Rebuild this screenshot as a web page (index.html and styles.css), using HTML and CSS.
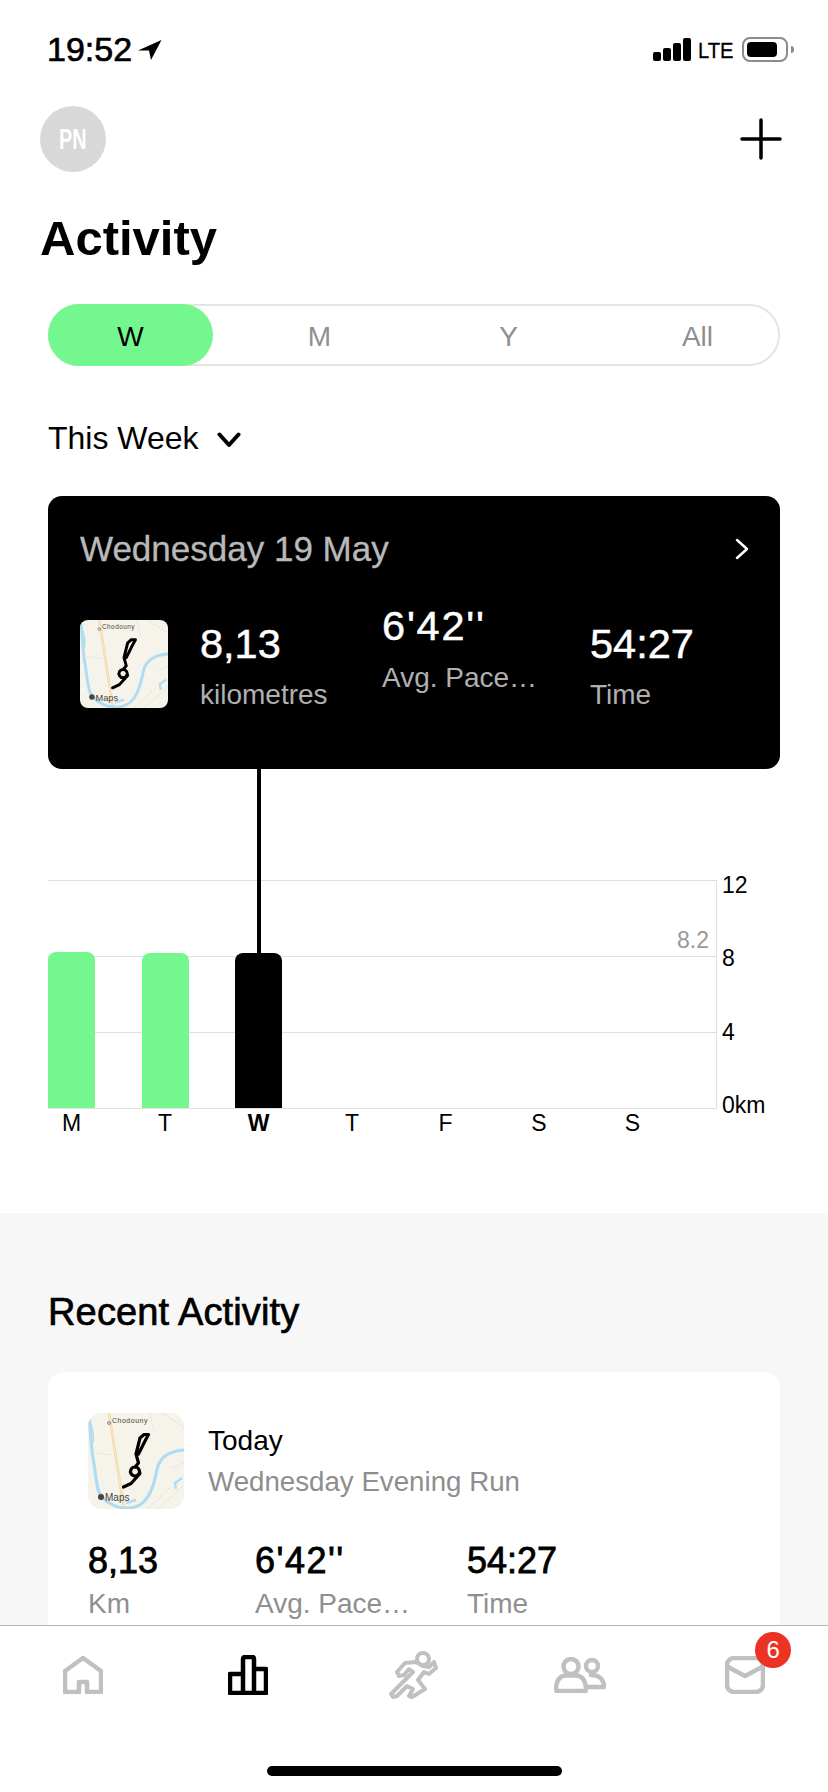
FILE: index.html
```html
<!DOCTYPE html>
<html lang="en">
<head>
<meta charset="utf-8">
<title>Activity</title>
<link rel="stylesheet" href="styles.css">
</head>
<body>
<svg class="defs" width="0" height="0" aria-hidden="true">
  <symbol id="map" viewBox="0 0 96 96">
    <rect width="96" height="96" fill="#f6f3ea"/>
    <path d="M62 0 66 18 M74 0 96 14 M70 96 96 72 M60 96 82 74 M8 40 24 42 M32 70 44 78 M84 55 96 50" fill="none" stroke="#dfddd3" stroke-width="1" stroke-dasharray="2 1.5"/>
    <path d="M21 0 36 96" fill="none" stroke="#f2d6a2" stroke-width="2.6"/>
    <path d="M21 0 36 96" fill="none" stroke="#fbf3dd" stroke-width=".7"/>
    <path d="M1 3C3 20 3 35 5 45S8 72 11 79 24 94 36 95 56 92 62 80 67 62 70 53 82 38 96 37" fill="none" stroke="#aedcf2" stroke-width="3.2"/>
    <path d="M1 8C5 15 6 22 5 30" fill="none" stroke="#aedcf2" stroke-width="1.6"/>
    <path d="M88 76 87 70 94 65M38 90 48 87" fill="none" stroke="#aedcf2" stroke-width="2.4"/>
    <circle cx="21" cy="10" r="1.4" fill="#fff" stroke="#444" stroke-width=".7"/>
    <circle cx="13" cy="84" r="3" fill="#444"/>
    <path d="M35.500 74 43 70.500 52 60.500M47 54a4.500 4.500 0 1 0 .01 0M47 54 50.500 50 48 41 52 25 56 21.500H60.500L57 28 50.500 41" fill="none" stroke="#000" stroke-width="3.200" stroke-linecap="round" stroke-linejoin="round"/>
  </symbol>
</svg>

<div class="screen">
  <div class="main">
    <div class="status">
      <div class="clock">
        <span class="time">19:52</span>
        <svg class="loc" viewBox="0 0 24 20"><path d="M23.500 0 0 10.500H11L13 20Z"/></svg>
      </div>
      <div class="status-right">
        <svg class="signal" viewBox="0 0 38 24">
          <rect x="0" y="14" width="8" height="9" rx="2"/>
          <rect x="10" y="10" width="8" height="13" rx="2"/>
          <rect x="20" y="5" width="8" height="18" rx="2"/>
          <rect x="30" y="0" width="8" height="23" rx="2"/>
        </svg>
        <span class="lte">LTE</span>
        <div class="battery"><div class="battery-fill"></div></div>
        <div class="battery-nub"></div>
      </div>
    </div>

    <div class="top">
      <div class="avatar"><span>PN</span></div>
      <svg class="plus" viewBox="0 0 42 42"><path d="M21 2V40M2 21H40"/></svg>
    </div>

    <h1 class="title">Activity</h1>

    <div class="segments">
      <div class="segment active">W</div>
      <div class="segment">M</div>
      <div class="segment">Y</div>
      <div class="segment">All</div>
    </div>

    <div class="range">
      <span>This Week</span>
      <svg class="chev-down" viewBox="0 0 24 16"><path d="M2.500 2.500 12 13 21.500 2.500"/></svg>
    </div>

    <div class="day-card">
      <div class="day-head">
        <span class="day-date">Wednesday 19 May</span>
        <svg class="chev-right" viewBox="0 0 14 22"><path d="M2 2 12 11 2 20"/></svg>
      </div>
      <div class="day-stats">
        <svg class="thumb-sm" viewBox="0 0 96 96">
          <use href="#map" width="96" height="96"/>
          <text x="24" y="10" class="map-town">Chodouny</text>
          <text x="17" y="88" class="map-brand">Maps</text>
        </svg>
        <div class="stat">
          <div class="stat-value">8,13</div>
          <div class="stat-label">kilometres</div>
        </div>
        <div class="stat stat-raised">
          <div class="stat-value pace">6'42''</div>
          <div class="stat-label">Avg. Pace…</div>
        </div>
        <div class="stat">
          <div class="stat-value">54:27</div>
          <div class="stat-label">Time</div>
        </div>
      </div>
    </div>

    <div class="chart">
      <div class="plot">
        <div class="grid-lines">
          <div class="grid-line"></div>
          <div class="grid-line"></div>
          <div class="grid-line"></div>
        </div>
        <span class="avg">8.2</span>
        <div class="bars">
          <div class="bar" style="height:156px"></div>
          <div class="bar" style="height:155px"></div>
          <div class="bar bar-selected" style="height:155px"></div>
        </div>
      </div>
      <div class="y-axis">
        <span>12</span><span>8</span><span>4</span><span>0km</span>
      </div>
    </div>
    <div class="days">
      <span>M</span><span>T</span><span class="day-on">W</span><span>T</span><span>F</span><span>S</span><span>S</span>
    </div>

    <section class="recent">
      <h2 class="recent-title">Recent Activity</h2>
      <div class="recent-card">
        <div class="recent-head">
          <svg class="thumb-lg" viewBox="0 0 96 96">
            <use href="#map" width="96" height="96"/>
            <text x="24" y="10" class="map-town">Chodouny</text>
            <text x="17" y="88" class="map-brand">Maps</text>
          </svg>
          <div class="recent-text">
            <div class="recent-when">Today</div>
            <div class="recent-name">Wednesday Evening Run</div>
          </div>
        </div>
        <div class="recent-stats">
          <div>
            <div class="recent-value">8,13</div>
            <div class="recent-label">Km</div>
          </div>
          <div>
            <div class="recent-value recent-pace">6'42''</div>
            <div class="recent-label">Avg. Pace…</div>
          </div>
          <div>
            <div class="recent-value">54:27</div>
            <div class="recent-label">Time</div>
          </div>
        </div>
      </div>
    </section>
  </div>

  <nav class="tabbar">
    <div class="tabs">
      <div class="tab">
        <svg class="ico ico-home" viewBox="0 0 40 38"><path d="M2 36V15L20 2 38 15V36H24V26H16V36Z"/></svg>
      </div>
      <div class="tab">
        <svg class="ico ico-stats" viewBox="0 0 40 40"><path d="M2 38V19H15V4Q15 2 17 2H24Q26 2 26 4V14H38V38ZM15 19V38M26 14V38"/></svg>
      </div>
      <div class="tab">
        <svg class="ico ico-run" viewBox="0 0 49 48">
          <circle cx="34" cy="8" r="6"/>
          <path d="M27 11 16 12 8 21 10 25 15 24 20 18 24 21 15 30 2 43 4 46 8 45 18 35 24 38 20 45 23 46 36 38 29 29 35 21 40 23 47 17 45 11 40 16 34 15Z"/>
        </svg>
      </div>
      <div class="tab">
        <svg class="ico ico-people" viewBox="0 0 52 36">
          <circle cx="17" cy="9.500" r="7.500"/>
          <circle cx="38" cy="9" r="6"/>
          <path d="M2.500 34C1 26 5 18.500 12 18.500H22C29 18.500 33 26 31.500 34Z"/>
          <path d="M37 18C46 18 50 23 50 30H34"/>
        </svg>
      </div>
      <div class="tab">
        <div class="mail">
          <svg class="ico ico-mail" viewBox="0 0 40 38">
            <rect x="2" y="2" width="36" height="34" rx="7"/>
            <path d="M3 11 20 20 37 11"/>
          </svg>
          <span class="badge">6</span>
        </div>
      </div>
    </div>
    <div class="home-indicator"></div>
  </nav>
</div>
</body>
</html>
```
FILE: styles.css
```css
* { box-sizing: border-box; }
html, body { margin: 0; padding: 0; background: #fff; }
body { font-family: "Liberation Sans", Arial, sans-serif; color: #000; }
.defs { position: absolute; }
.map-town { font: 7px "Liberation Sans", sans-serif; fill: #444; letter-spacing: .5px; }
.map-brand { font: 10px "Liberation Sans", sans-serif; fill: #444; }

.screen { width: 828px; height: 1792px; display: flex; flex-direction: column; overflow: hidden; }
.main { flex: 1; min-height: 0; overflow: hidden; display: flex; flex-direction: column; }

/* status bar */
.status { height: 106px; flex: none; padding: 32px 34px 0 47px; display: flex; justify-content: space-between; align-items: flex-start; }
.clock { display: flex; align-items: flex-start; gap: 6px; }
.time { font-size: 34px; line-height: 34px; -webkit-text-stroke: .7px #000; }
.loc { width: 24px; height: 20px; margin-top: 8px; fill: #000; }
.status-right { display: flex; align-items: flex-start; margin-top: 5px; }
.signal { width: 38px; height: 24px; margin-top: 1px; fill: #000; }
.lte { font-size: 22px; line-height: 24px; margin: 2px 0 0 7px; width: 36px; transform: scaleX(.92); transform-origin: left center; white-space: nowrap; -webkit-text-stroke: .3px #000; }
.battery { width: 46px; height: 25px; border: 2px solid #8c8c8c; border-radius: 8px; padding: 3px; margin-left: 8px; }
.battery-fill { width: 30px; height: 15px; background: #000; border-radius: 4px; }
.battery-nub { width: 3px; height: 7px; background: #8c8c8c; border-radius: 0 3px 3px 0; margin: 9px 0 0 3px; }

/* header */
.top { flex: none; display: flex; justify-content: space-between; align-items: center; padding: 0 46px 0 40px; height: 66px; }
.avatar { width: 66px; height: 66px; border-radius: 50%; background: #d8d8d8; display: flex; align-items: center; justify-content: center; }
.avatar span { color: #fff; font-size: 30px; font-weight: 700; transform: scaleX(.66); }
.plus { width: 42px; height: 42px; fill: none; stroke: #000; stroke-width: 3.500; stroke-linecap: round; }
.title { margin: 38px 0 0 40px; font-size: 49px; line-height: 56px; font-weight: 700; flex: none; }

/* segmented */
.segments { flex: none; margin: 38px 48px 0; height: 62px; border: 2px solid #e4e4e4; border-radius: 31px; display: grid; grid-template-columns: repeat(4, 165px); column-gap: 24px; }
.segment { margin: -2px 0; margin-left: -2px; width: 165px; padding-top: 4px; display: flex; align-items: center; justify-content: center; font-size: 28px; color: #8f8f8f; border-radius: 31px; }
.segment.active { background: #75f78f; color: #000; }

/* range */
.range { flex: none; margin: 52px 48px 0; display: flex; align-items: center; gap: 18px; font-size: 32px; line-height: 40px; }
.chev-down { width: 24px; height: 16px; margin-top: 4px; fill: none; stroke: #000; stroke-width: 4; stroke-linecap: round; stroke-linejoin: round; }

/* black card */
.day-card { flex: none; margin: 38px 48px 0; height: 273px; background: #000; border-radius: 14px; padding: 33px 32px 0; color: #fff; }
.day-head { display: flex; justify-content: space-between; align-items: center; height: 40px; margin-bottom: 1px; }
.day-date { font-size: 35px; line-height: 40px; color: #b9b9b9; -webkit-text-stroke: .3px #b9b9b9; }
.chev-right { width: 14px; height: 22px; margin-right: -1px; fill: none; stroke: #fff; stroke-width: 2.500; stroke-linecap: round; stroke-linejoin: round; }
.day-stats { margin-top: 51px; display: grid; grid-template-columns: 88px 150px 176px auto; column-gap: 32px; align-items: start; }
.thumb-sm { width: 88px; height: 88px; border-radius: 8px; display: block; }
.stat { white-space: nowrap; }
.stat-raised { margin-top: -18px; }
.stat-value { font-size: 41.500px; line-height: 48px; -webkit-text-stroke: .5px #fff; }
.stat-label { margin-top: 10px; font-size: 28px; line-height: 34px; color: #b0b0b0; }
.stat-raised .stat-label { margin-top: 11px; }
.pace { letter-spacing: 1.800px; }

/* chart */
.chart { flex: none; margin: 111px 0 0 48px; display: flex; align-items: flex-start; }
.plot { position: relative; width: 669px; height: 229px; border-right: 1px solid #e0e0e0; border-bottom: 1px solid #e0e0e0; }
.grid-lines { height: 100%; display: flex; flex-direction: column; }
.grid-line { flex: 1; border-top: 1px solid #e0e0e0; }
.avg { position: absolute; right: 7px; top: 47px; font-size: 23px; line-height: 26px; color: #999; }
.bars { position: absolute; left: 0; bottom: 0; display: grid; grid-template-columns: repeat(7, 47px); column-gap: 46.500px; align-items: end; }
.bar { position: relative; background: #75f78f; border-radius: 8px 8px 0 0; }
.bar-selected { background: #000; }
.bar-selected::before { content: ""; position: absolute; left: 22px; bottom: 100%; width: 4px; height: 184px; background: #000; }
.y-axis { margin: -8px 0 0 5px; height: 246px; display: flex; flex-direction: column; justify-content: space-between; font-size: 23px; line-height: 26px; }
.days { flex: none; height: 28px; margin: -8px 0 0 48px; display: grid; grid-template-columns: repeat(7, 47px); column-gap: 46.500px; font-size: 23px; line-height: 26px; text-align: center; }
.day-on { font-weight: 700; }

/* recent */
.recent { flex: 1; margin-top: 75px; background: #f7f7f7; padding: 78px 48px 0; }
.recent-title { margin: 0; font-size: 38px; line-height: 42px; font-weight: 400; letter-spacing: .15px; -webkit-text-stroke: .7px #000; }
.recent-card { margin-top: 39px; background: #fff; border-radius: 16px; padding: 41px 40px 60px; }
.recent-head { display: flex; gap: 24px; align-items: flex-start; }
.thumb-lg { width: 96px; height: 96px; border-radius: 14px; display: block; flex: none; }
.recent-text { margin-top: 11px; }
.recent-when { font-size: 28px; line-height: 34px; }
.recent-name { margin-top: 7px; font-size: 27.700px; line-height: 34px; color: #8e8e8e; }
.recent-stats { margin-top: 31px; display: grid; grid-template-columns: 167px 212px auto; white-space: nowrap; }
.recent-value { font-size: 36px; line-height: 42px; -webkit-text-stroke: .8px #000; }
.recent-pace { letter-spacing: 1.500px; }
.recent-label { margin-top: 5px; font-size: 28px; line-height: 34px; color: #8f8f8f; }

/* tab bar */
.tabbar { flex: none; height: 167px; background: #fff; border-top: 1px solid #b5b5b5; display: flex; flex-direction: column; }
.tabs { display: flex; height: 48px; margin-top: 25px; }
.tab { flex: 1; display: flex; align-items: center; justify-content: center; }
.ico { display: block; fill: none; stroke: #c0c0c0; stroke-width: 4.500; stroke-linecap: round; stroke-linejoin: round; }
.ico-home { width: 40px; height: 38px; }
.ico-stats { width: 40px; height: 40px; stroke: #000; }
.ico-run { width: 49px; height: 48px; stroke-width: 4; }
.ico-people { width: 52px; height: 36px; }
.ico-mail { width: 40px; height: 38px; }
.mail { position: relative; }
.badge { position: absolute; left: 30px; top: -24px; width: 36px; height: 36px; border-radius: 50%; background: #ec3323; color: #fff; font-size: 24px; line-height: 36px; text-align: center; }
.home-indicator { width: 295px; height: 10px; border-radius: 5px; background: #000; margin: auto auto 16px; }
```
